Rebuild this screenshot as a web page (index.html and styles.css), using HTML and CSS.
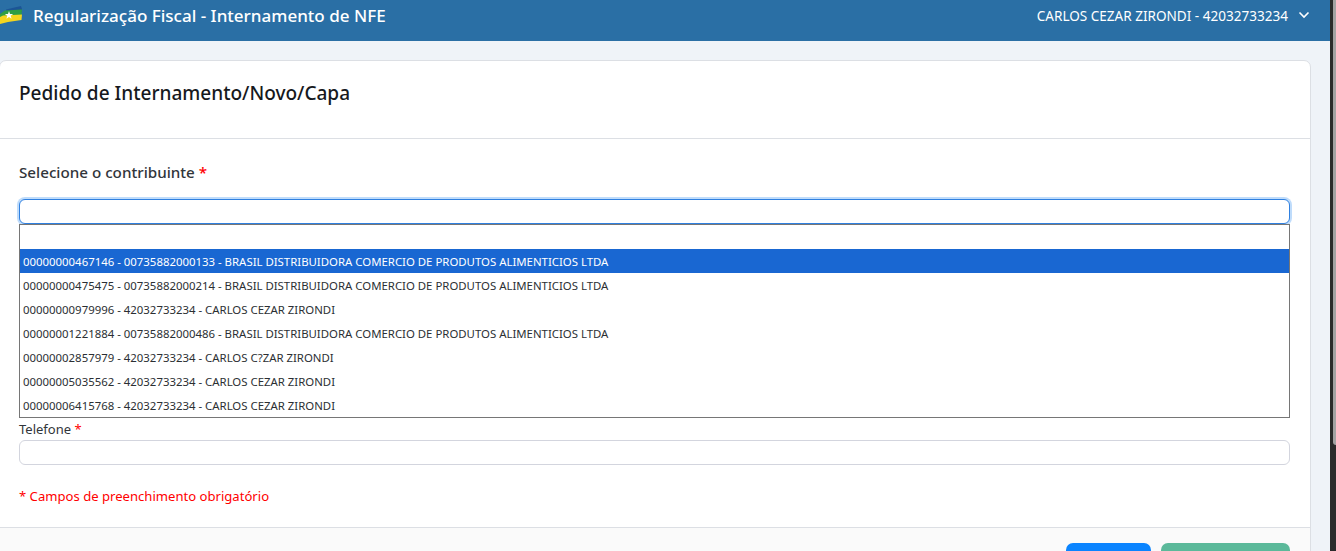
FILE: index.html
```html
<!DOCTYPE html>
<html lang="pt-BR">
<head>
<meta charset="utf-8">
<title>Regularização Fiscal - Internamento de NFE</title>
<link rel="stylesheet" href="styles.css">
</head>
<body>
<div class="viewport">
  <div class="page">
    <header class="topbar">
      <div class="brand">
        <svg class="flag" viewBox="0 0 23 20" width="23" height="20" aria-hidden="true">
          <path d="M6 3.5 21 0 22 3 21.5 6 7 8Z" fill="#1c5596"/>
          <path d="M0 8 5 4.5 22 3.5 21.5 9 0 11Z" fill="#2f9e44"/>
          <path d="M0 11 3 9.5 22 8.5 21.5 14 8 16 0 18Z" fill="#f3d51f"/>
          <path d="M9 5l1 3 3.2-.1-2.5 1.9.9 3L9 11l-2.6 1.8.9-3-2.5-1.9L8 8Z" fill="#fff"/>
        </svg>
        <span class="brand-title">Regularização Fiscal - Internamento de NFE</span>
      </div>
      <div class="user">
        <span>CARLOS CEZAR ZIRONDI - 42032733234</span>
        <svg class="chevron" viewBox="0 0 12 8" width="12" height="8" aria-hidden="true">
          <path d="M1.5 1.5 6 6l4.5-4.5" fill="none" stroke="#fff" stroke-width="1.6"/>
        </svg>
      </div>
    </header>
    <main class="card">
      <div class="card-head">
        <h1>Pedido de Internamento/Novo/Capa</h1>
      </div>
      <div class="card-body">
        <label class="main-label">Selecione o contribuinte <span class="req">*</span></label>
        <div class="combo">
          <input class="field field-focus" type="text" aria-label="Contribuinte">
          <ul class="options">
            <li class="option"></li>
            <li class="option selected">00000000467146 - 00735882000133 - BRASIL DISTRIBUIDORA COMERCIO DE PRODUTOS ALIMENTICIOS LTDA</li>
            <li class="option">00000000475475 - 00735882000214 - BRASIL DISTRIBUIDORA COMERCIO DE PRODUTOS ALIMENTICIOS LTDA</li>
            <li class="option">00000000979996 - 42032733234 - CARLOS CEZAR ZIRONDI</li>
            <li class="option">00000001221884 - 00735882000486 - BRASIL DISTRIBUIDORA COMERCIO DE PRODUTOS ALIMENTICIOS LTDA</li>
            <li class="option">00000002857979 - 42032733234 - CARLOS C?ZAR ZIRONDI</li>
            <li class="option">00000005035562 - 42032733234 - CARLOS CEZAR ZIRONDI</li>
            <li class="option">00000006415768 - 42032733234 - CARLOS CEZAR ZIRONDI</li>
          </ul>
        </div>
        <label class="sub-label">Telefone <span class="req">*</span></label>
        <input class="field" type="text" aria-label="Telefone">
        <p class="note">* Campos de preenchimento obrigatório</p>
      </div>
      <div class="card-foot">
        <button class="btn btn-blue" type="button"></button>
        <button class="btn btn-green" type="button"></button>
      </div>
    </main>
  </div>
  <div class="scrollbar"><div class="thumb"></div></div>
</div>
</body>
</html>
```
FILE: styles.css
```css
* { box-sizing: border-box; }
html, body { margin: 0; height: 100%; overflow: hidden; }
body {
  font-family: "Noto Sans", "Open Sans", "Liberation Sans", sans-serif;
  color: #212529;
  background: #eff3f8;
}
.viewport { display: flex; height: 551px; overflow: hidden; }
.page { flex: 1; min-width: 0; overflow: hidden; }
.topbar {
  height: 41px;
  background: #2a6fa5;
  color: #fff;
  display: flex;
  justify-content: space-between;
  padding: 0 20px 10px 0;
  align-items: center;
}
.brand { display: flex; align-items: center; gap: 10px; }
.flag { display: block; margin-top: 1px; }
.brand-title { font-size: 17.05px; font-weight: 500; line-height: 30px; }
.user { display: flex; align-items: center; gap: 10px; font-size: 13.55px; line-height: 30px; }
.chevron { display: block; margin-top: -1px; }
.card {
  margin: 19px 19px 0 -1px;
  background: #fff;
  border: 1px solid #dcdfe4;
  border-radius: 7px;
}
.card-head { height: 78px; padding: 19px 19px 0 19px; border-bottom: 1px solid #dcdfe4; }
h1 { margin: 0; font-size: 19.05px; font-weight: 500; line-height: 26px; color: #16191d; }
.card-body { padding: 22px 20px 0 19px; height: 388px; }
.main-label { display: block; font-size: 15.2px; font-weight: 500; line-height: 22px; color: #31353a; }
.req { color: #f00; }
.combo { margin-top: 16px; }
.field {
  display: block;
  width: 100%;
  height: 25px;
  border: 1px solid #d3d5de;
  border-radius: 6px;
  background: #fff;
  outline: none;
}
.field-focus {
  border-color: #2f80e0;
  box-shadow: 0 0 0 2px #bfdcfb;
}
.options {
  list-style: none;
  margin: 0;
  padding: 0;
  height: 194px;
  border: 1px solid #767676;
  background: #fff;
  overflow: hidden;
}
.option {
  height: 24px;
  padding: 0 3px;
  font-size: 11.4px;
  line-height: 25px;
  white-space: nowrap;
  color: #2b2f33;
}
.selected { background: #1967d2; color: #fff; }
.sub-label { display: block; font-size: 13px; line-height: 22px; color: #31353a; }
.note { margin: 21px 0 0; font-size: 13.1px; line-height: 20px; color: #f00; }
.card-foot {
  display: flex;
  justify-content: flex-end;
  gap: 10px;
  height: 60px;
  padding: 15px 20px 0 0;
  background: #fafafa;
  border-top: 1px solid #dcdfe4;
}
.btn { width: 85px; height: 40px; border: 0; border-radius: 7px; padding: 0; }
.btn-blue { background: #0a84ff; }
.btn-green { width: 129px; background: #5bb99a; }
.scrollbar { width: 6px; background: #2b2b2b; padding-left: 3px; flex: none; }
.thumb { width: 3px; height: 445px; background: #a3a3a3; border-radius: 0 0 0 3px; }
```
